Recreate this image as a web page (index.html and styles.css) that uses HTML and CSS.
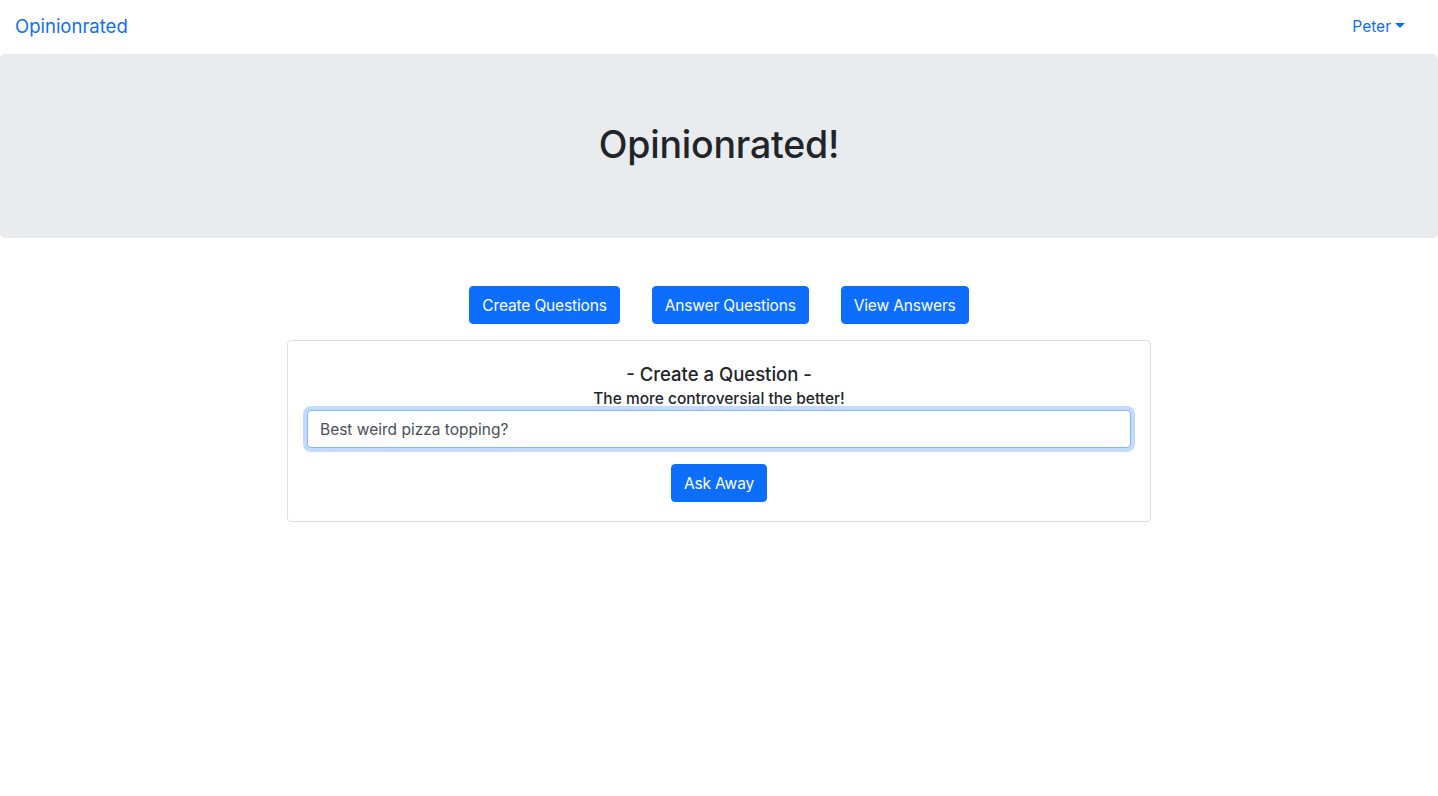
FILE: index.html
```html
<!DOCTYPE html>
<html lang="en">
<head>
<meta charset="utf-8">
<title>Opinionrated</title>
<link rel="stylesheet" href="styles.css">
</head>
<body>
<nav class="navbar">
  <a class="brand" href="#">Opinionrated</a>
  <a class="user" href="#">Peter<span class="caret"></span></a>
</nav>
<header class="jumbotron">
  <h1>Opinionrated!</h1>
</header>
<main class="content">
  <div class="actions">
    <button class="btn">Create Questions</button>
    <button class="btn">Answer Questions</button>
    <button class="btn">View Answers</button>
  </div>
  <section class="card">
    <h5 class="card-title">- Create a Question -</h5>
    <p class="card-sub">The more controversial the better!</p>
    <input class="field" type="text" value="Best weird pizza topping?">
    <button class="btn">Ask Away</button>
  </section>
</main>
</body>
</html>
```
FILE: styles.css
```css
* { box-sizing: border-box; }
html, body { margin: 0; padding: 0; }
body {
  font-family: Inter, "Noto Sans", "Liberation Sans", sans-serif;
  font-size: 15.5px;
  color: #212529;
  background: #fff;
}
.navbar {
  height: 54px;
  display: flex;
  align-items: center;
  justify-content: space-between;
  padding: 0 33px 0 15px;
}
.brand {
  color: #0d6efd;
  text-decoration: none;
  font-size: 18.5px;
  line-height: 1;
  margin-top: -1px;
}
.user {
  color: #0d6efd;
  text-decoration: none;
  font-size: 15.5px;
  display: flex;
  align-items: center;
  margin-top: -1px;
}
.caret {
  display: inline-block;
  margin-left: 4px;
  width: 0;
  height: 0;
  border-left: 5px solid transparent;
  border-right: 5px solid transparent;
  border-top: 5px solid #0d6efd;
  margin-top: -2px;
}
.jumbotron {
  background: #e9ecef;
  height: 184px;
  border-radius: 5px;
  display: flex;
  align-items: center;
  justify-content: center;
  padding-bottom: 4px;
}
.jumbotron h1 {
  margin: 0;
  font-size: 37.5px;
  font-weight: 500;
  color: #212529;
  letter-spacing: -0.2px;
}
.content {
  display: flex;
  flex-direction: column;
  align-items: center;
  padding-top: 48px;
}
.actions {
  display: flex;
  gap: 32px;
  margin-bottom: 16px;
}
.btn {
  font-family: inherit;
  font-size: 15.5px;
  letter-spacing: -0.15px;
  line-height: 24px;
  padding: 7px 12px 5px;
  height: 38px;
  color: #fff;
  background: #0d6efd;
  border: 1px solid #0d6efd;
  border-radius: 4px;
  cursor: pointer;
}
.card {
  width: 864px;
  border: 1px solid #dcdee0;
  border-radius: 4px;
  padding: 21px 19px 19px;
  display: flex;
  flex-direction: column;
  align-items: center;
}
.card-title {
  margin: 0 0 2px;
  font-size: 18.5px;
  font-weight: 500;
  line-height: 24px;
}
.card-sub {
  margin: 0;
  font-size: 15.5px;
  font-weight: 450;
  line-height: 22px;
}
.field {
  width: 100%;
  height: 38px;
  font-family: inherit;
  font-size: 15.5px;
  color: #495057;
  padding: 6px 12px;
  border: 1px solid #86b7fe;
  border-radius: 4px;
  box-shadow: 0 0 0 4px rgba(13, 110, 253, 0.25);
  outline: none;
  margin-bottom: 16px;
}
```
